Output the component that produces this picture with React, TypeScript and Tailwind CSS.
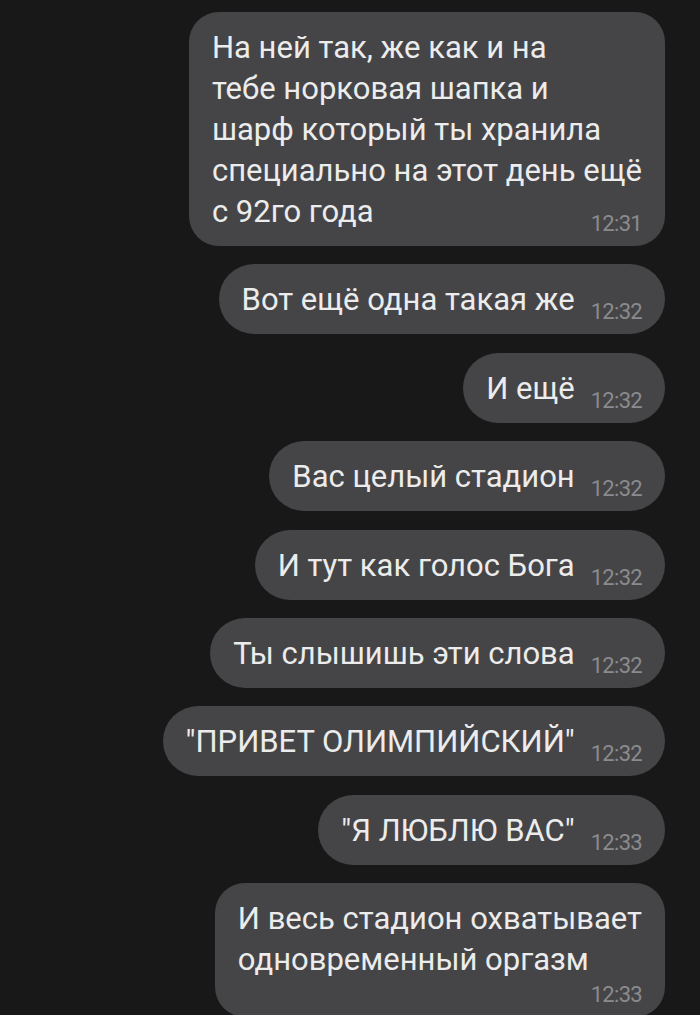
const messages = [
  {
    lines: [
      "На ней так, же как и на",
      "тебе норковая шапка и",
      "шарф который ты хранила",
      "специально на этот день ещё",
      "с 92го года",
    ],
    time: "12:31",
  },
  { lines: ["Вот ещё одна такая же"], time: "12:32" },
  { lines: ["И ещё"], time: "12:32" },
  { lines: ["Вас целый стадион"], time: "12:32" },
  { lines: ["И тут как голос Бога"], time: "12:32" },
  { lines: ["Ты слышишь эти слова"], time: "12:32" },
  { lines: ['"ПРИВЕТ ОЛИМПИЙСКИЙ"'], time: "12:32" },
  { lines: ['"Я ЛЮБЛЮ ВАС"'], time: "12:33" },
  {
    lines: ["И весь стадион охватывает", "одновременный оргазм"],
    time: "12:33",
    timeBelow: true,
  },
];

const Time = ({ t }: { t: string }) => (
  <span className="ml-[16px] -mb-[1px] text-[22px] leading-[18px] tracking-[-0.7px] text-[#8b8b8d] whitespace-nowrap">
    {t}
  </span>
);

function Bubble({ m }: { m: any }) {
  const multi = m.lines.length > 1;
  const head = m.timeBelow ? m.lines : m.lines.slice(0, -1);
  const last = m.lines[m.lines.length - 1];

  return (
    <div
      className={
        "flex flex-col bg-[#454547] pl-[23px] pr-[23px] pt-[15px] pb-[14px] text-[31px] leading-[41px] text-[#ececec] " +
        (multi ? "rounded-[30px]" : "rounded-[35px]")
      }
    >
      {head.map((l: string, i: number) => (
        <div key={i} className="whitespace-nowrap">
          {l}
        </div>
      ))}
      {m.timeBelow ? (
        <div className="flex justify-end pt-[6px]">
          <Time t={m.time} />
        </div>
      ) : (
        <div className="flex items-end justify-between">
          <span className="whitespace-nowrap">{last}</span>
          <Time t={m.time} />
        </div>
      )}
    </div>
  );
}

export default function App() {
  return (
    <div className="h-[1015px] overflow-hidden bg-[#181818] font-['Roboto','Noto_Sans',sans-serif]">
      <div className="flex flex-col items-end gap-[18.4px] pt-[12px] pr-[35px]">
        {messages.map((m, i) => (
          <Bubble key={i} m={m} />
        ))}
      </div>
    </div>
  );
}
